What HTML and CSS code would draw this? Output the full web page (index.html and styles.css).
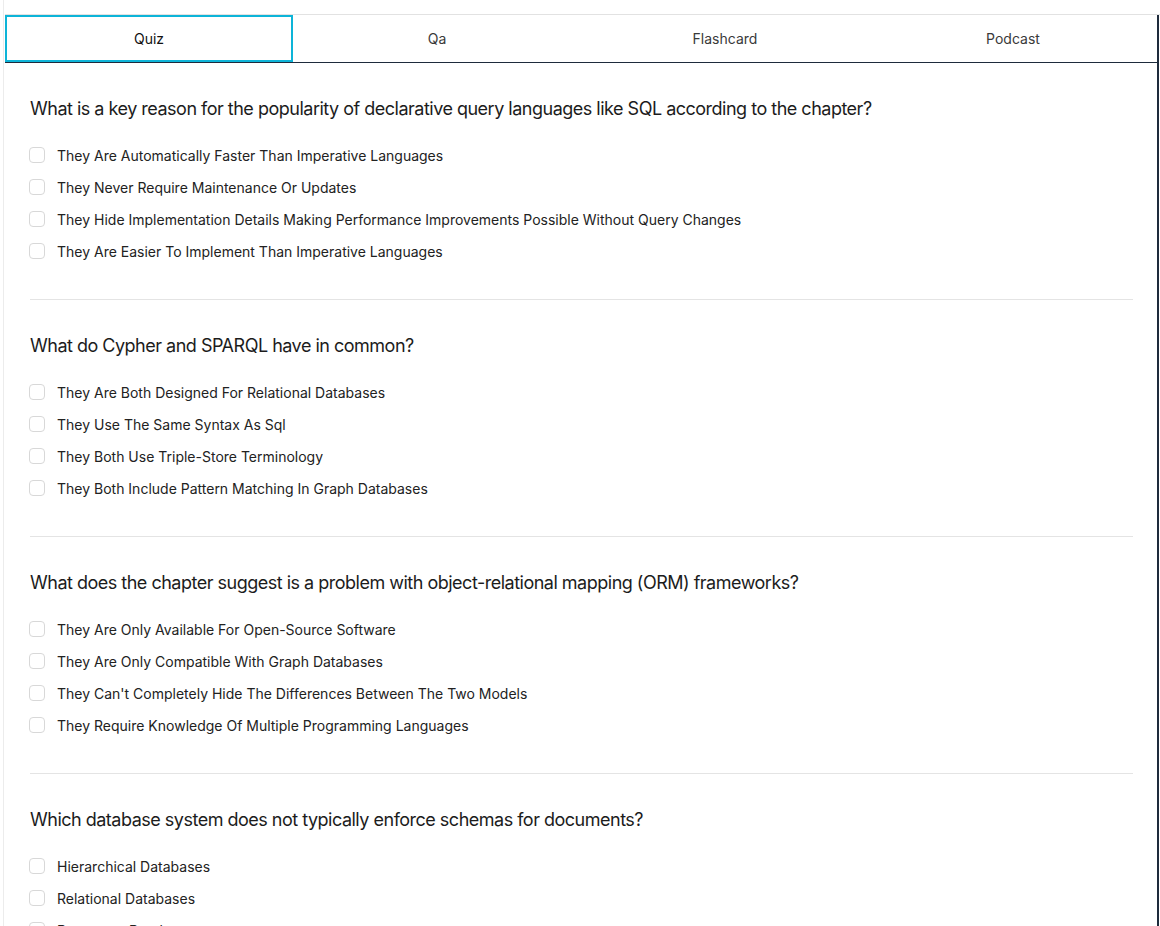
FILE: index.html
```html
<!DOCTYPE html>
<html lang="en">
<head>
<meta charset="utf-8">
<title>Quiz</title>
<link rel="stylesheet" href="styles.css">
</head>
<body>
<div class="frame">
  <div class="panel">
    <div class="tabs">
      <div class="tablist">
        <button class="tab active">Quiz</button>
        <button class="tab">Qa</button>
        <button class="tab">Flashcard</button>
        <button class="tab">Podcast</button>
      </div>
      <div class="content">
        <section class="question">
          <h3 class="q-title">What is a key reason for the popularity of declarative query languages like SQL according to the chapter?</h3>
          <ul class="options">
            <li class="option"><span class="box"></span><span>They Are Automatically Faster Than Imperative Languages</span></li>
            <li class="option"><span class="box"></span><span>They Never Require Maintenance Or Updates</span></li>
            <li class="option"><span class="box"></span><span>They Hide Implementation Details Making Performance Improvements Possible Without Query Changes</span></li>
            <li class="option"><span class="box"></span><span>They Are Easier To Implement Than Imperative Languages</span></li>
          </ul>
        </section>
        <section class="question">
          <h3 class="q-title">What do Cypher and SPARQL have in common?</h3>
          <ul class="options">
            <li class="option"><span class="box"></span><span>They Are Both Designed For Relational Databases</span></li>
            <li class="option"><span class="box"></span><span>They Use The Same Syntax As Sql</span></li>
            <li class="option"><span class="box"></span><span>They Both Use Triple-Store Terminology</span></li>
            <li class="option"><span class="box"></span><span>They Both Include Pattern Matching In Graph Databases</span></li>
          </ul>
        </section>
        <section class="question">
          <h3 class="q-title">What does the chapter suggest is a problem with object-relational mapping (ORM) frameworks?</h3>
          <ul class="options">
            <li class="option"><span class="box"></span><span>They Are Only Available For Open-Source Software</span></li>
            <li class="option"><span class="box"></span><span>They Are Only Compatible With Graph Databases</span></li>
            <li class="option"><span class="box"></span><span>They Can't Completely Hide The Differences Between The Two Models</span></li>
            <li class="option"><span class="box"></span><span>They Require Knowledge Of Multiple Programming Languages</span></li>
          </ul>
        </section>
        <section class="question">
          <h3 class="q-title">Which database system does not typically enforce schemas for documents?</h3>
          <ul class="options">
            <li class="option"><span class="box"></span><span>Hierarchical Databases</span></li>
            <li class="option"><span class="box"></span><span>Relational Databases</span></li>
            <li class="option"><span class="box"></span><span>Document Databases</span></li>
            <li class="option"><span class="box"></span><span>Graph Databases</span></li>
          </ul>
        </section>
      </div>
    </div>
  </div>
</div>
</body>
</html>
```

FILE: styles.css
```css
* { box-sizing: border-box; }
html, body { margin: 0; padding: 0; background: #fff; }
body {
  font-family: Inter, "Noto Sans", "Liberation Sans", sans-serif;
  color: #1f1f1f;
  overflow: hidden;
  height: 926px;
}
.frame {
  margin-left: 3px;
  border-left: 1px solid #ececec;
  padding-left: 1px;
  padding-top: 14px;
  min-height: 926px;
}
.panel {
  border-top: 1px solid #e2e2e2;
}
.tabs {
  border-right: 2px solid #1e2b3c;
  margin-right: 1px;
  min-height: 920px;
}
.tablist {
  display: grid;
  grid-template-columns: repeat(4, 1fr);
  border-bottom: 1px solid #1e2b3c;
}
.tab {
  height: 47px;
  border: 2px solid transparent;
  background: #fff;
  font-family: inherit;
  font-size: 14px;
  color: #3a3a3a;
  padding: 0;
  margin: 0;
  cursor: pointer;
}
.tab.active {
  border-color: #0db4d8;
  color: #111;
}
.content {
  padding: 32px 24px 0 25px;
}
.question {
  padding-bottom: 32px;
  margin-bottom: 32px;
  border-bottom: 1px solid #e4e4e4;
}
.q-title {
  margin: 0 0 16px;
  font-size: 18px;
  font-weight: 400;
  letter-spacing: -0.5px;
  line-height: 28px;
  color: #1c1c1c;
}
.options {
  list-style: none;
  margin: 0;
  padding: 0;
}
.option {
  display: flex;
  align-items: center;
  gap: 12px;
  height: 32px;
  font-size: 14px;
  color: #222;
}
.box {
  width: 16px;
  height: 16px;
  flex: none;
  margin-left: -1px;
  border: 1px solid #d8d8d8;
  border-radius: 4px;
  background: #fff;
}
```
